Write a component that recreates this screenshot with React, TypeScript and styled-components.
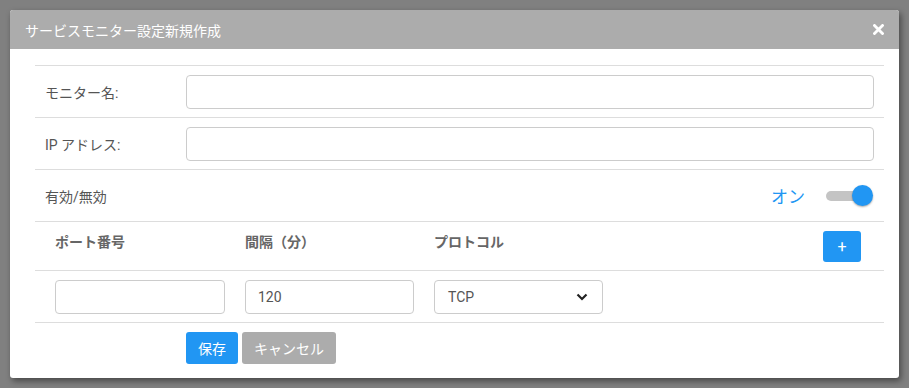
import React from 'react'
import styled, { createGlobalStyle } from 'styled-components'

const GlobalStyle = createGlobalStyle`
  html, body {
    margin: 0;
    padding: 0;
    background: #808080;
    font-family: Roboto, "Noto Sans CJK JP", sans-serif;
  }
`

const Backdrop = styled.div`
  width: 909px;
  height: 388px;
  padding: 10px 10px 0 10px;
  box-sizing: border-box;
`

const Modal = styled.div`
  width: 889px;
  background: #fff;
  border-radius: 3px;
  box-shadow: 2px 3px 6px rgba(0, 0, 0, 0.45);
  overflow: hidden;
`

const Header = styled.div`
  height: 39px;
  background: #acacac;
  display: flex;
  align-items: center;
  justify-content: space-between;
  padding: 0 15px;
  color: #fff;
`

const Title = styled.h1`
  margin: 0;
  font-size: 14px;
  font-weight: 400;
`

const Close = styled.span`
  display: flex;
  width: 11px;
  height: 11px;
`

const Body = styled.div`
  padding: 16px 15px 14px 25px;
`

const Row = styled.div`
  display: flex;
  align-items: center;
  height: 52px;
  padding: 0 10px;
  border-top: 1px solid #ddd;
  box-sizing: border-box;
`

const Label = styled.label`
  width: 141px;
  flex-shrink: 0;
  font-size: 14px;
  color: #555;
`

const TextInput = styled.input<{ $width?: number }>`
  ${p => (p.$width ? `width: ${p.$width}px;` : 'flex: 1;')}
  height: 34px;
  box-sizing: border-box;
  border: 1px solid #ccc;
  border-radius: 4px;
  padding: 0 12px;
  font-family: inherit;
  font-size: 14px;
  color: #555;
  outline: none;
`

const Spacer = styled.div`
  flex: 1;
`

const ToggleText = styled.span`
  font-size: 17px;
  color: #2196f3;
  margin-right: 21px;
`

const Track = styled.div`
  position: relative;
  width: 41px;
  height: 10px;
  border-radius: 5px;
  background: #c4c4c4;
  margin-right: 7px;
`

const Knob = styled.div`
  position: absolute;
  right: -6px;
  top: -6px;
  width: 21px;
  height: 21px;
  border-radius: 50%;
  background: #2196f3;
  box-shadow: 0 1px 2px rgba(0, 0, 0, 0.35);
`

const TableRow = styled.div<{ $height: number }>`
  display: grid;
  grid-template-columns: 190px 189px 189px 1fr;
  align-items: center;
  height: ${p => p.$height}px;
  padding: 0 10px;
  border-top: 1px solid #ddd;
  box-sizing: border-box;
`

const Cell = styled.div<{ $end?: boolean }>`
  padding: 0 10px;
  display: flex;
  justify-content: ${p => (p.$end ? 'flex-end' : 'flex-start')};
  ${p => (p.$end ? 'padding-right: 13px;' : '')}
`

const ColHead = styled.span`
  font-size: 14px;
  font-weight: 700;
  color: #666;
  margin-top: -11px;
`

const AddButton = styled.button`
  width: 38px;
  height: 31px;
  border: none;
  border-radius: 3px;
  background: #2196f3;
  color: #fff;
  font-size: 16px;
  font-family: inherit;
  padding: 0;
`

const Select = styled.div`
  width: 169px;
  height: 34px;
  box-sizing: border-box;
  border: 1px solid #ccc;
  border-radius: 4px;
  padding: 0 14px 0 13px;
  display: flex;
  align-items: center;
  justify-content: space-between;
  font-size: 14px;
  color: #555;
`

const Actions = styled.div`
  display: flex;
  gap: 4px;
  padding: 9px 0 0 151px;
  border-top: 1px solid #ddd;
`

const Button = styled.button<{ $primary?: boolean }>`
  height: 32px;
  border: none;
  border-radius: 3px;
  padding: 0 12px;
  font-family: inherit;
  font-size: 14px;
  color: #fff;
  background: ${p => (p.$primary ? '#2196f3' : '#acacac')};
`

const App: React.FC = () => {
  return (
    <>
      <GlobalStyle />
      <Backdrop>
        <Modal>
          <Header>
            <Title>サービスモニター設定新規作成</Title>
            <Close aria-label="閉じる">
              <svg width="11" height="11" viewBox="0 0 11 11">
                <path d="M1.5 1.5 L9.5 9.5 M9.5 1.5 L1.5 9.5" stroke="#fff" strokeWidth="2.8" strokeLinecap="square" />
              </svg>
            </Close>
          </Header>
          <Body>
            <Row>
              <Label>モニター名:</Label>
              <TextInput />
            </Row>
            <Row>
              <Label>IP アドレス:</Label>
              <TextInput />
            </Row>
            <Row>
              <Label>有効/無効</Label>
              <Spacer />
              <ToggleText>オン</ToggleText>
              <Track>
                <Knob />
              </Track>
            </Row>
            <TableRow $height={49}>
              <Cell><ColHead>ポート番号</ColHead></Cell>
              <Cell><ColHead>間隔（分）</ColHead></Cell>
              <Cell><ColHead>プロトコル</ColHead></Cell>
              <Cell $end><AddButton>+</AddButton></Cell>
            </TableRow>
            <TableRow $height={52}>
              <Cell><TextInput $width={170} /></Cell>
              <Cell><TextInput $width={169} defaultValue="120" /></Cell>
              <Cell>
                <Select>
                  <span>TCP</span>
                  <svg width="12" height="8" viewBox="0 0 12 8">
                    <path d="M1.5 1.5 L6 6 L10.5 1.5" fill="none" stroke="#222" strokeWidth="2.2" />
                  </svg>
                </Select>
              </Cell>
              <Cell />
            </TableRow>
            <Actions>
              <Button $primary>保存</Button>
              <Button>キャンセル</Button>
            </Actions>
          </Body>
        </Modal>
      </Backdrop>
    </>
  )
}

export default App
